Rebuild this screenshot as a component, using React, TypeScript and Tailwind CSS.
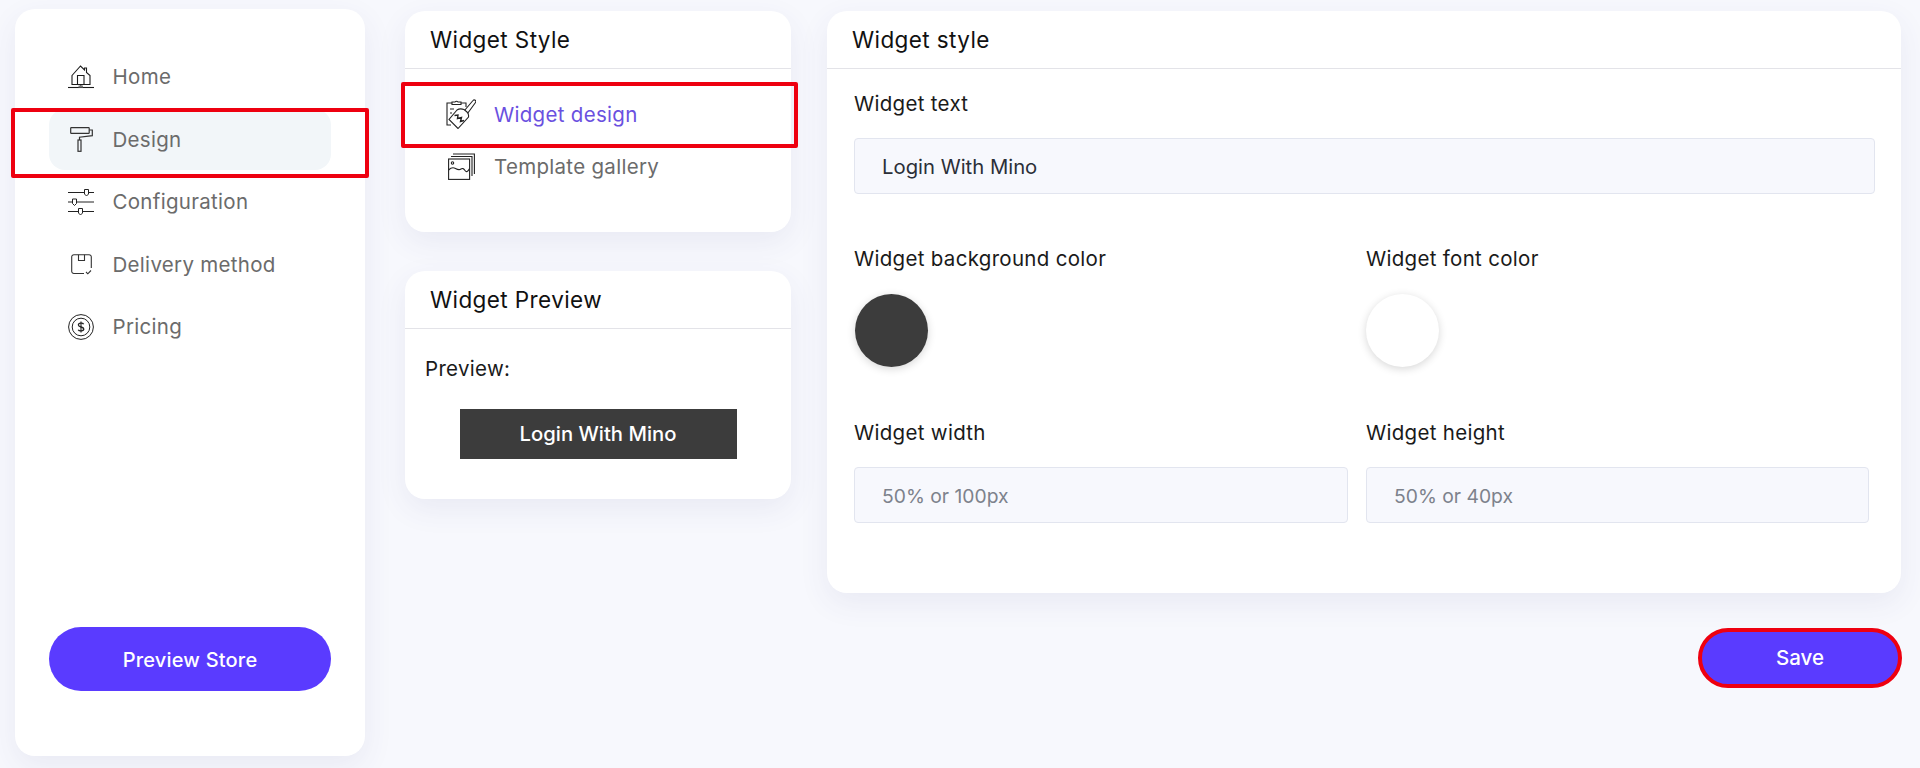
import type { ReactNode } from 'react';

function HomeIcon() {
  return (
    <svg width="26" height="24" viewBox="0 0 26 24" fill="none" stroke="#1c1c1c" strokeWidth="1.1">
      <path d="M4 10.5 L12.5 1 L16.5 5 V3 H18.5 V7.5 L22 10.5 V19.5 H4 Z" />
      <path d="M9.5 19.5 V10.5 H16 V19.5" />
      <path d="M12.8 19.5 V21.5" />
      <path d="M0 22.5 H26" />
      <rect x="10.5" y="20.5" width="4.5" height="2" fill="#777" stroke="none" />
    </svg>
  );
}

function RollerIcon() {
  return (
    <svg width="23" height="25" viewBox="0 0 23 25" fill="none" stroke="#333" strokeWidth="1.2">
      <rect x="0.7" y="0.7" width="18.5" height="5.6" rx="0.6" />
      <path d="M19.2 3 H22.3 V8.6 L9.5 10.2 V13" />
      <rect x="8" y="13" width="3" height="11.3" />
    </svg>
  );
}

function SlidersIcon() {
  return (
    <svg width="26" height="26" viewBox="0 0 26 26" fill="none" stroke="#222" strokeWidth="1">
      <path d="M0 3.5 H26 M0 13 H26 M0 22.5 H26" />
      <path d="M16.5 0.5 H20.5 V5 L18.5 7 L16.5 5 Z" fill="#fff" />
      <path d="M4.5 10 H8.5 V14.5 L6.5 16.5 L4.5 14.5 Z" fill="#fff" />
      <path d="M10.5 19.5 H14.5 V24 L12.5 26 L10.5 24 Z" fill="#fff" />
    </svg>
  );
}

function BoxIcon() {
  return (
    <svg width="21" height="21" viewBox="0 0 21 21" fill="none" stroke="#333" strokeWidth="1.1">
      <path d="M13 19.5 H3 A2.2 2.2 0 0 1 0.7 17.3 V3 A2.2 2.2 0 0 1 3 0.7 H18 A2.2 2.2 0 0 1 20.3 3 V14" />
      <path d="M7.5 0.7 V6.5 H13.5 V0.7" />
      <path d="M15 18 L16.8 19.8 L20 16.5" />
    </svg>
  );
}

function CoinIcon() {
  return (
    <svg width="26" height="26" viewBox="0 0 26 26" fill="none" stroke="#222" strokeWidth="1">
      <circle cx="13" cy="13" r="12.4" />
      <circle cx="13" cy="13" r="8.8" />
      <path d="M15.6 10.2 C15 8.8 10.4 8.6 10.4 11 C10.4 13.6 15.8 12.4 15.8 15.1 C15.8 17.4 11 17.3 10.2 15.7" strokeWidth="1.3" />
      <path d="M13 7.4 V18.6" strokeWidth="1.1" />
    </svg>
  );
}

function BrushIcon() {
  return (
    <svg width="30" height="30" viewBox="0 0 30 30" fill="none" stroke="#222" strokeWidth="1.1">
      <path d="M5 26 H1 V4 H6 M15 4 H20 V8" />
      <path d="M6 5.5 V3 H9 A2 2 0 0 1 12 3 H15 V5.5 Z" />
      <path d="M4 10 H8 M4 14 H6" />
      <path d="M18.5 11.5 L27 1.5 A1.6 1.6 0 0 1 29.5 3.5 L21.5 14.5" />
      <path d="M11 11 L3 20.5 L12 29.5 L22.5 18 Q23 15 21 13 L18 10.5 Q14 9 11 11 Z" fill="#fff" />
      <path d="M8.5 16.5 L12 16 L11.5 19.5 L15.5 18.5 L14.5 22.5 L18 21.5" strokeWidth="1.4" />
    </svg>
  );
}

function GalleryIcon() {
  return (
    <svg width="27" height="27" viewBox="0 0 27 27" fill="none" stroke="#222" strokeWidth="1.1">
      <path d="M5 1 H26.4 V21" />
      <path d="M3 3.5 H24 V23" />
      <rect x="0.6" y="6" width="21" height="20.4" fill="#fff" />
      <circle cx="4.5" cy="10" r="1.2" />
      <path d="M0.6 17 Q4 13.5 7.5 15.5 T13 16 T17 17.5 T21.6 15.5" />
    </svg>
  );
}

const navItems = [
  { label: 'Home', icon: <HomeIcon /> },
  { label: 'Design', icon: <RollerIcon />, active: true },
  { label: 'Configuration', icon: <SlidersIcon /> },
  { label: 'Delivery method', icon: <BoxIcon /> },
  { label: 'Pricing', icon: <CoinIcon /> },
];

function RedBox({ className }: { className: string }) {
  return <div className={`absolute border-4 border-[#ee0010] rounded-[2px] z-10 ${className}`} />;
}

function Card({ title, className, children }: { title: string; className?: string; children: ReactNode }) {
  return (
    <div className={`bg-white rounded-[20px] shadow-[0_10px_30px_rgba(70,70,130,0.08)] ${className ?? ''}`}>
      <div className="h-[58px] flex items-center pl-[25px] border-b border-[#e3e3e8] text-[22.5px] text-[#111] tracking-[0.4px]">
        {title}
      </div>
      {children}
    </div>
  );
}

function Label({ children }: { children: ReactNode }) {
  return <div className="h-6 leading-6 text-[20.5px] text-[#1a1a1a] tracking-[0.3px]">{children}</div>;
}

function Field({ label, value, placeholder, className }: { label: string; value?: string; placeholder?: string; className?: string }) {
  return (
    <div className={className}>
      <Label>{label}</Label>
      <input
        readOnly
        value={value ?? ''}
        placeholder={placeholder}
        className="mt-[22px] w-full h-[56px] px-[27px] bg-[#f7f8fd] border border-[#e2e5ef] rounded-[4px] text-[20.3px] text-[#2b2f38] placeholder:text-[19.3px] placeholder:text-[#7d828c] outline-none"
      />
    </div>
  );
}

export default function App() {
  return (
    <div className="h-[768px] overflow-hidden bg-[#f7f8fd] flex items-start pl-[15px] pt-[9px] font-[Inter,sans-serif]">
      <aside className="w-[350px] h-[747px] shrink-0 bg-white rounded-[20px] shadow-[0_10px_30px_rgba(70,70,130,0.08)] flex flex-col px-[34px] pt-[37.5px] pb-[65px]">
        <nav className="flex flex-col gap-[1.5px]">
          {navItems.map((item) => (
            <div
              key={item.label}
              className={`relative h-[61px] flex items-center pl-[19px] rounded-[16px] ${item.active ? 'bg-[#f2f6f9]' : ''}`}
            >
              <span className="w-[26px] flex justify-center shrink-0">{item.icon}</span>
              <span className="ml-[18.5px] pt-px text-[20.5px] text-[#6b6b6b] tracking-[0.3px]">{item.label}</span>
              {item.active && <RedBox className="-left-[38px] -right-[38px] -top-[1px] -bottom-[8px]" />}
            </div>
          ))}
        </nav>
        <button className="mt-auto h-16 pt-[2px] rounded-full bg-[#5a3bff] text-white text-[20px] font-medium tracking-[0.2px]">
          Preview Store
        </button>
      </aside>

      <div className="w-[386px] shrink-0 ml-[40px] mt-[2px] flex flex-col gap-[39px]">
        <Card title="Widget Style" className="h-[221px]">
          <div className="pt-[19px]">
            <div className="relative h-[52px] flex items-center pl-[41px]">
              <BrushIcon />
              <span className="ml-[18px] pt-[2px] text-[20.5px] text-[#6a50e0] tracking-[0.3px]">Widget design</span>
              <RedBox className="-left-[4px] -right-[7px] -top-[6px] -bottom-[8px]" />
            </div>
            <div className="h-[52px] flex items-center pl-[41px]">
              <span className="w-[30px] flex justify-center"><GalleryIcon /></span>
              <span className="ml-[18px] pt-[2px] text-[20.5px] text-[#6b6b6b] tracking-[0.3px]">Template gallery</span>
            </div>
          </div>
        </Card>

        <Card title="Widget Preview">
          <div className="px-[20px] pt-[28px] pb-[40px]">
            <Label>Preview:</Label>
            <button className="block mt-[28px] pt-px mx-auto w-[277px] h-[50px] bg-[#3c3c3c] text-white text-[20.25px] font-medium">
              Login With Mino
            </button>
          </div>
        </Card>
      </div>

      <div className="w-[1075px] shrink-0 ml-[36px] mt-[2px]">
        <Card title="Widget style" className="h-[582px] mr-px">
          <div className="pl-[27px] pr-[26px] pt-[23px]">
            <Field label="Widget text" value="Login With Mino" />
            <div className="mt-[53px] grid grid-cols-[494px_503px] gap-x-[18px]">
              <div>
                <Label>Widget background color</Label>
                <div className="mt-[23px] ml-px w-[73px] h-[73px] rounded-full bg-[#3c3c3c] shadow-[0_2px_8px_rgba(0,0,0,0.16)]" />
              </div>
              <div>
                <Label>Widget font color</Label>
                <div className="mt-[23px] w-[73px] h-[73px] rounded-full bg-white shadow-[0_2px_8px_rgba(0,0,0,0.16)]" />
              </div>
            </div>
            <div className="mt-[54px] grid grid-cols-[494px_503px] gap-x-[18px]">
              <Field label="Widget width" placeholder="50% or 100px" />
              <Field label="Widget height" placeholder="50% or 40px" />
            </div>
          </div>
        </Card>
        <div className="mt-[35px] flex justify-end">
          <button className="w-[204px] h-[60px] pt-[1px] rounded-full bg-[#5a3bff] border-4 border-[#ee0010] text-white text-[20.5px] font-medium">
            Save
          </button>
        </div>
      </div>
    </div>
  );
}
